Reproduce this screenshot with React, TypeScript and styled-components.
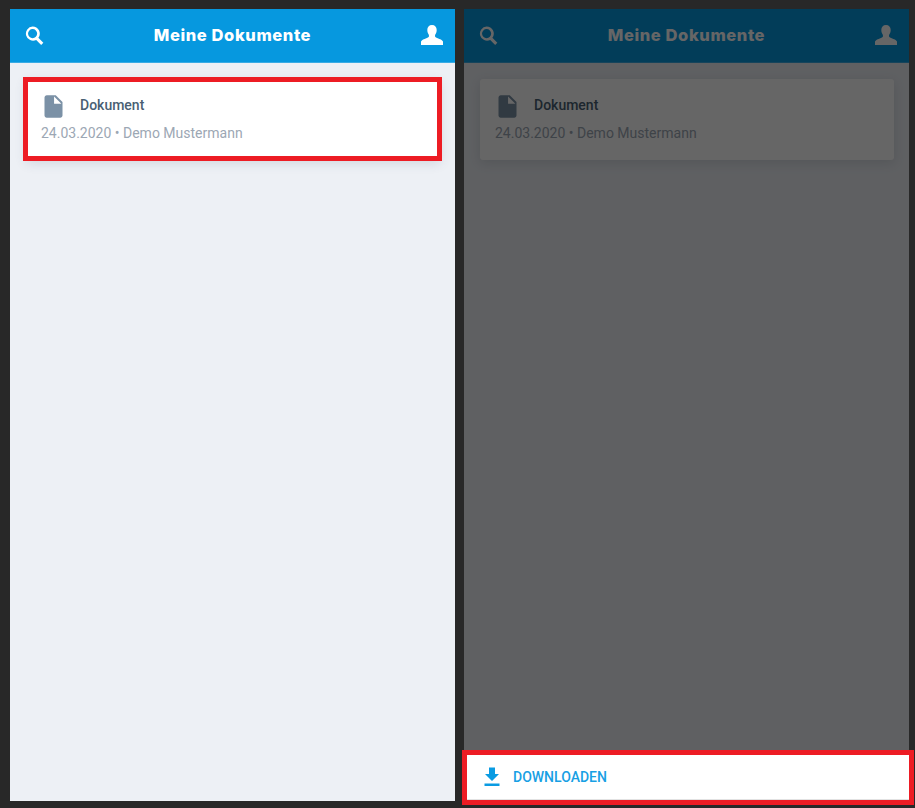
import React from "react";
import styled, { createGlobalStyle } from "styled-components";

const Global = createGlobalStyle`
  html, body { margin: 0; padding: 0; background: #282828; }
  body { font-family: Roboto, "Liberation Sans", sans-serif; }
`;

const Page = styled.div`
  width: 915px;
  height: 808px;
  box-sizing: border-box;
  padding: 9px 6px 7px 10px;
  display: flex;
  gap: 9px;
  overflow: hidden;
`;

const Screen = styled.section`
  position: relative;
  width: 445px;
  height: 792px;
  background: #edf0f5;
  display: flex;
  flex-direction: column;
`;

const Header = styled.header`
  height: 54px;
  flex: none;
  box-sizing: border-box;
  background: #0698df;
  border-bottom: 1px solid #39abe4;
  display: flex;
  align-items: center;
  justify-content: space-between;
  padding: 0 12px 1px 15px;
  color: #fff;
`;

const Title = styled.h1`
  margin: 0;
  font-family: Inter, "Liberation Sans", sans-serif;
  font-size: 16.5px;
  font-weight: 800;
  letter-spacing: 0.6px;
  color: #fff;
`;

const HeaderIcon = styled.svg`
  display: block;
  fill: currentColor;
`;

const List = styled.main`
  flex: 1;
  padding: 16px 15px 16px 16px;
`;

const Card = styled.article<{ $marked?: boolean }>`
  position: relative;
  height: 81px;
  box-sizing: border-box;
  padding: 14px 15px 0;
  background: #fff;
  border-radius: 3px;
  box-shadow: 0 3px 12px rgba(60, 75, 100, 0.16);
  ${(p) =>
    p.$marked &&
    `&::after {
      content: "";
      position: absolute;
      inset: -2px -2px -1px -3px;
      border: 5px solid #ed1c24;
      pointer-events: none;
    }`}
`;

const CardHead = styled.div`
  display: flex;
  align-items: center;
  gap: 15px;
  height: 26px;
`;

const FileIcon = styled.svg`
  display: block;
  flex: none;
  margin-left: -1.5px;
  fill: #7b91a6;
`;

const DocName = styled.span`
  font-size: 14px;
  font-weight: 500;
  color: #4a5f73;
  margin: 0 0 2px -1.5px;
`;

const Meta = styled.p`
  margin: 6px 0 0;
  font-size: 14px;
  line-height: 16px;
  font-weight: 400;
  color: #9ca7b4;
`;

const Dim = styled.div`
  position: absolute;
  inset: 0;
  background: rgba(0, 0, 0, 0.6);
`;

const Sheet = styled.div`
  position: absolute;
  left: -2px;
  right: -5px;
  bottom: -4px;
  height: 55px;
  box-sizing: border-box;
  background: #fff;
  border: 5px solid #ed1c24;
  box-shadow: inset 0 -1px 0 #e2e2e2;
  display: flex;
  align-items: center;
  gap: 9px;
  padding: 0 0 2px 13px;
`;

const DownloadIcon = styled.svg`
  display: block;
  fill: #0a9be2;
`;

const SheetLabel = styled.span`
  font-size: 14px;
  font-weight: 500;
  color: #18a0e4;
`;

const SearchGlyph = () => (
  <HeaderIcon width="19" height="19" viewBox="0 0 20 20">
    <path fillRule="evenodd" d="M8 0.5a7.500 7.500 0 0 1 6.100 11.900l5.200 5.200-2.300 2.300-5.200-5.200A7.500 7.500 0 1 1 8 0.500zm0 2.700a4.800 4.800 0 1 0 0 9.600 4.800 4.800 0 0 0 0-9.600z" />
  </HeaderIcon>
);

const UserGlyph = () => (
  <HeaderIcon width="22" height="20" viewBox="0 0 22 20">
    <path d="M11 0c3 0 4.700 2 4.700 5 0 1.400-.3 2.500-.8 3.500-.4.800-.9 1.400-.9 2.400 0 1.200 1 1.700 2.700 2.300 2.300.8 4.500 1.700 5.300 3.300V20H0v-3.500c.8-1.600 3-2.500 5.300-3.300C7 12.600 8 12.100 8 10.900c0-1-.5-1.600-.9-2.400-.5-1-.8-2.100-.8-3.500C6.300 2 8 0 11 0z" />
  </HeaderIcon>
);

const FileGlyph = () => (
  <FileIcon width="27" height="27" viewBox="0 0 24 24">
    <path d="M6 2c-1.100 0-2 .9-2 2v16c0 1.100.9 2 2 2h12c1.100 0 2-.9 2-2V8l-6-6H6zm6.500 7.500V3l6.500 6.500h-6.500z" />
  </FileIcon>
);

const Content = ({ marked }: { marked?: boolean }) => (
  <>
    <Header>
      <SearchGlyph />
      <Title>Meine Dokumente</Title>
      <UserGlyph />
    </Header>
    <List>
      <Card $marked={marked}>
        <CardHead>
          <FileGlyph />
          <DocName>Dokument</DocName>
        </CardHead>
        <Meta>24.03.2020 • Demo Mustermann</Meta>
      </Card>
    </List>
  </>
);

export default function App() {
  return (
    <Page>
      <Global />
      <Screen>
        <Content marked />
      </Screen>
      <Screen>
        <Content />
        <Dim />
        <Sheet>
          <DownloadIcon width="24" height="24" viewBox="0 0 24 24">
            <path d="M19 9h-4V2.500H9V9H5l7 7 7-7zM4.500 18.500V21h15v-2.500h-15z" />
          </DownloadIcon>
          <SheetLabel>DOWNLOADEN</SheetLabel>
        </Sheet>
      </Screen>
    </Page>
  );
}
